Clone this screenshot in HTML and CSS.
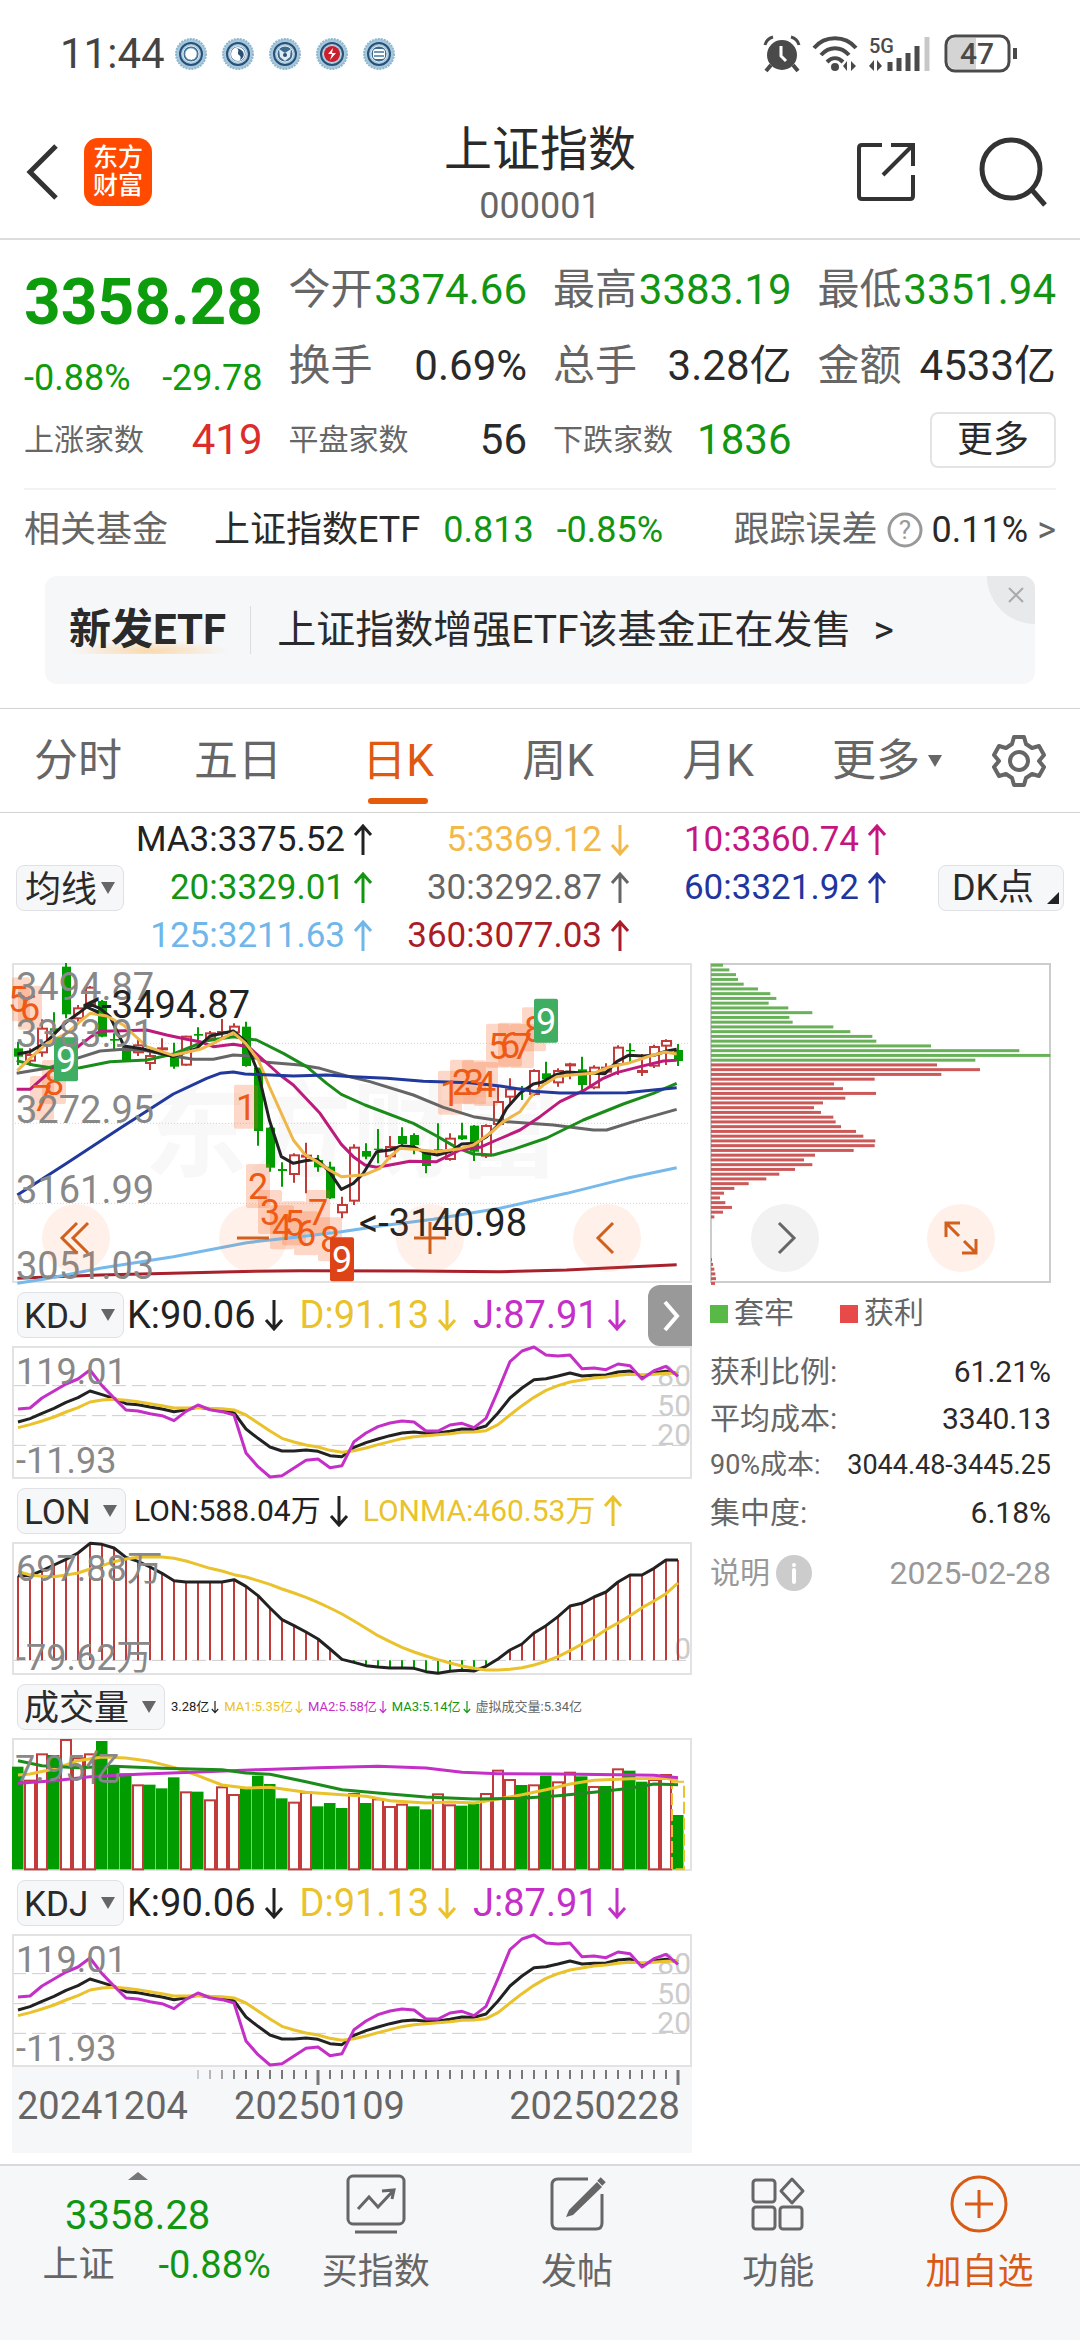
FILE: index.html
```html
<!DOCTYPE html>
<html lang="zh-CN">
<head>
  <meta charset="UTF-8" />
  <meta name="viewport" content="width=device-width, initial-scale=1.0"/>
  <title>上证指数 000001</title>
  <link rel="stylesheet" href="styles.css">
</head>
<body>

  <!-- shared icons -->
  <svg class="sprite" aria-hidden="true">
    <symbol id="up" viewBox="0 0 20 32"><path d="M10 31V2M2 11l8-9 8 9" fill="none" stroke="currentColor" stroke-width="3"/></symbol>
    <symbol id="down" viewBox="0 0 20 32"><path d="M10 1v29M2 21l8 9 8-9" fill="none" stroke="currentColor" stroke-width="3"/></symbol>
    <symbol id="seal" viewBox="0 0 34 34">
      <circle cx="17" cy="17" r="15" fill="#a5c8dc" stroke="#8fb8cf" stroke-width="2" stroke-dasharray="2 1"/>
      <circle cx="17" cy="17" r="11" fill="#a9c9dc" stroke="#2a5078" stroke-width="2"/>
      <circle cx="17" cy="17" r="8" fill="#3f6a90" stroke="#dcebf2" stroke-width="1"/>
    </symbol>
  </svg>

  <div class="status-bar">
    <span class="clock">11:44</span>
    <div class="seals">
      <svg viewBox="0 0 34 34"><use href="#seal"/><circle cx="17" cy="17" r="6" fill="#fff" stroke="#6aa6c4" stroke-dasharray="2 1"/></svg>
      <svg viewBox="0 0 34 34"><use href="#seal"/><circle cx="17" cy="17" r="7" fill="#fff"/><path d="M15 11c5 2 0 5 3 7s1 4 1 5c6-3 5-11-4-12z" fill="#2a5078"/></svg>
      <svg viewBox="0 0 34 34"><use href="#seal"/><path d="M11 12l6 4 6-4-1 8-5 4-5-4z" fill="#dfeaf1"/><circle cx="17" cy="18" r="2" fill="#2a5078"/></svg>
      <svg viewBox="0 0 34 34"><use href="#seal"/><circle cx="17" cy="17" r="8" fill="#c9202e"/><path d="M18 11l-5 6h4l-2 6 6-7h-4z" fill="#fff"/></svg>
      <svg viewBox="0 0 34 34"><use href="#seal"/><rect x="11" y="12" width="12" height="10" rx="3" fill="#fff"/><path d="M12 15h10M12 19h10" stroke="#4a7596" stroke-width="1.5"/></svg>
    </div>
    <div class="system">
      <svg width="38" height="36" viewBox="0 0 38 36">
        <circle cx="19" cy="19" r="15" fill="#4a4a4a"/>
        <path d="M8 29l-5 6M30 29l5 6" stroke="#4a4a4a" stroke-width="4"/>
        <path d="M2 9c1-4 4-7 8-8M36 9c-1-4-4-7-8-8" fill="none" stroke="#4a4a4a" stroke-width="3"/>
        <path d="M18 10v10l5 5" fill="none" stroke="#fff" stroke-width="3"/>
      </svg>
      <svg width="46" height="36" viewBox="0 0 46 36">
        <path d="M2 12c11-13 31-13 42 0M9 19c8-9 20-9 28 0M15 26c5-5 11-5 16 0" fill="none" stroke="#4a4a4a" stroke-width="4"/>
        <circle cx="23" cy="31" r="4" fill="#4a4a4a"/>
        <path d="M35 25v10l-4-5zM39 25v10l5-5z" fill="#4a4a4a"/>
      </svg>
      <svg width="64" height="36" viewBox="0 0 64 36">
        <text x="0" y="17" class="net">5G</text>
        <path d="M5 24v11l-5-5zM8 24v11l5-5z" fill="#4a4a4a"/>
        <path d="M21 26v9M30 22v13M39 17v18M48 10v25" stroke="#4a4a4a" stroke-width="5"/>
        <path d="M58 1v34" stroke="#c8c8c8" stroke-width="5"/>
      </svg>
      <svg width="76" height="40" viewBox="0 0 76 40">
        <rect x="2" y="2" width="63" height="35" rx="9" fill="#fff" stroke="#4a4a4a" stroke-width="3"/>
        <path d="M11 4h21v31H11q-7 0-7-7V11q0-7 7-7z" fill="#d4d4d4"/>
        <path d="M71 14v11" stroke="#4a4a4a" stroke-width="4"/>
        <text x="33" y="30" text-anchor="middle" class="battery">47</text>
      </svg>
    </div>
  </div>

  <header>
    <div class="head-left">
      <button class="icon-btn" aria-label="返回">
        <svg width="30" height="58" viewBox="0 0 30 58"><path d="M26 3L0 29l26 26" fill="none" stroke="#333" stroke-width="5"/></svg>
      </button>
      <a class="logo" href="#"><span>东方</span><span>财富</span></a>
    </div>
    <div class="head-title">
      <h1>上证指数</h1>
      <p>000001</p>
    </div>
    <div class="head-right">
      <button class="icon-btn" aria-label="分享">
        <svg width="62" height="62" viewBox="0 0 62 62"><path d="M26 4H6q-3 0-3 3v48q0 3 3 3h48q3 0 3-3V34M35 4h22v21M57 4L27 34" fill="none" stroke="#333" stroke-width="4"/></svg>
      </button>
      <button class="icon-btn" aria-label="搜索">
        <svg width="72" height="72" viewBox="0 0 72 72"><circle cx="33" cy="33" r="29" fill="none" stroke="#333" stroke-width="5"/><path d="M54 54l13 15" stroke="#333" stroke-width="5"/></svg>
      </button>
    </div>
  </header>

  <section class="quote">
    <div class="price">
      <strong>3358.28</strong>
      <p><span>-0.88%</span><span>-29.78</span></p>
    </div>
    <div class="stat"><span>今开</span><b class="green">3374.66</b></div>
    <div class="stat"><span>最高</span><b class="green">3383.19</b></div>
    <div class="stat"><span>最低</span><b class="green">3351.94</b></div>
    <div class="stat"><span>换手</span><b>0.69%</b></div>
    <div class="stat"><span>总手</span><b>3.28亿</b></div>
    <div class="stat"><span>金额</span><b>4533亿</b></div>
    <div class="stat small"><span>上涨家数</span><b class="red">419</b></div>
    <div class="stat small"><span>平盘家数</span><b>56</b></div>
    <div class="stat small"><span>下跌家数</span><b class="green">1836</b></div>
    <div class="stat more"><button>更多</button></div>
  </section>

  <section class="fund">
    <span class="muted">相关基金</span>
    <a href="#" class="fund-name">上证指数ETF</a>
    <span class="green">0.813</span>
    <span class="green">-0.85%</span>
    <div class="tracking">
      <span class="muted">跟踪误差</span>
      <svg width="36" height="36" viewBox="0 0 36 36"><circle cx="18" cy="18" r="16" fill="none" stroke="#999" stroke-width="3"/><text x="18" y="27" text-anchor="middle" class="help">?</text></svg>
      <span>0.11%</span><span class="muted">&gt;</span>
    </div>
  </section>

  <section class="banner">
    <strong>新发ETF</strong>
    <a href="#">上证指数增强ETF该基金正在发售<span>&gt;</span></a>
    <button class="close" aria-label="关闭"><svg width="18" height="18" viewBox="0 0 18 18"><path d="M2 2l14 14M16 2L2 16" stroke="#aaa" stroke-width="2"/></svg></button>
  </section>

  <nav class="tabs">
    <button>分时</button>
    <button>五日</button>
    <button class="active">日K</button>
    <button>周K</button>
    <button>月K</button>
    <button class="tab-more">更多</button>
    <button class="tab-settings" aria-label="设置">
      <svg width="54" height="54" viewBox="0 0 54 54"><path d="M22 3h10l2 7 6 4 7-2 5 9-5 6 5 6-5 9-7-2-6 4-2 7H22l-2-7-6-4-7 2-5-9 5-6-5-6 5-9 7 2 6-4z" fill="none" stroke="#666" stroke-width="4" stroke-linejoin="round"/><circle cx="27" cy="27" r="9" fill="none" stroke="#666" stroke-width="4"/></svg>
    </button>
  </nav>

  <section class="averages">
    <label class="picker tight"><select aria-label="主图指标"><option>均线</option></select></label>
    <div class="ma-grid">
      <span class="c-black">MA3:3375.52<svg><use href="#up"/></svg></span>
      <span class="c-amber">5:3369.12<svg><use href="#down"/></svg></span>
      <span class="c-magenta">10:3360.74<svg><use href="#up"/></svg></span>
      <span class="c-green">20:3329.01<svg><use href="#up"/></svg></span>
      <span class="c-gray">30:3292.87<svg><use href="#up"/></svg></span>
      <span class="c-blue">60:3321.92<svg><use href="#up"/></svg></span>
      <span class="c-sky">125:3211.63<svg><use href="#up"/></svg></span>
      <span class="c-crimson">360:3077.03<svg><use href="#up"/></svg></span>
    </div>
    <button class="dk">DK点</button>
  </section>

  <main class="analysis">
    <div class="left-col">
      <div class="chart-box">
        <svg id="kline" class="chart" viewBox="0 13 680 320"></svg>
        <div class="controls">
          <button aria-label="最前"><svg width="36" height="36" viewBox="0 0 36 36"><path d="M19 3L4 18l15 15M30 3L15 18l15 15"/></svg></button>
          <button aria-label="缩小"><svg width="36" height="36" viewBox="0 0 36 36"><path d="M2 18h32"/></svg></button>
          <button aria-label="放大"><svg width="36" height="36" viewBox="0 0 36 36"><path d="M2 18h32M18 2v32"/></svg></button>
          <button aria-label="左移"><svg width="36" height="36" viewBox="0 0 36 36"><path d="M24 3L9 18l15 15"/></svg></button>
        </div>
      </div>

      <div class="indicator">
        <label class="picker"><select aria-label="副图一"><option>KDJ</option></select></label>
        <span class="c-black">K:90.06<svg><use href="#down"/></svg></span>
        <span class="c-yellow">D:91.13<svg><use href="#down"/></svg></span>
        <span class="c-purple">J:87.91<svg><use href="#down"/></svg></span>
        <button class="side-toggle" aria-label="收起"><svg width="20" height="36" viewBox="0 0 20 36"><path d="M4 4l12 14L4 32" fill="none" stroke="#fff" stroke-width="4"/></svg></button>
      </div>
      <svg id="kdj1" class="chart" viewBox="0 57 680 133"></svg>

      <div class="indicator lon">
        <label class="picker"><select aria-label="副图二"><option>LON</option></select></label>
        <span class="c-black">LON:588.04万<svg><use href="#down"/></svg></span>
        <span class="c-yellow">LONMA:460.53万<svg><use href="#up"/></svg></span>
      </div>
      <svg id="lon" class="chart" viewBox="0 63 680 133"></svg>

      <div class="indicator volume">
        <label class="picker"><select aria-label="副图三"><option>成交量</option></select></label>
        <span class="c-black">3.28亿<svg><use href="#down"/></svg></span>
        <span class="c-yellow">MA1:5.35亿<svg><use href="#down"/></svg></span>
        <span class="c-purple">MA2:5.58亿<svg><use href="#down"/></svg></span>
        <span class="c-green">MA3:5.14亿<svg><use href="#down"/></svg></span>
        <span class="c-gray">虚拟成交量:5.34亿</span>
      </div>
      <svg id="volume" class="chart" viewBox="0 59 680 133"></svg>

      <div class="indicator">
        <label class="picker"><select aria-label="副图四"><option>KDJ</option></select></label>
        <span class="c-black">K:90.06<svg><use href="#down"/></svg></span>
        <span class="c-yellow">D:91.13<svg><use href="#down"/></svg></span>
        <span class="c-purple">J:87.91<svg><use href="#down"/></svg></span>
      </div>
      <svg id="kdj2" class="chart" viewBox="0 57 680 133"></svg>

      <div class="timeline">
        <svg id="ticks" class="chart" viewBox="0 0 680 20"></svg>
        <div class="dates"><span>20241204</span><span>20250109</span><span>20250228</span></div>
      </div>
    </div>

    <aside>
      <div class="chart-box">
        <svg id="chips" class="chart" viewBox="0 13 341 320"></svg>
        <div class="controls">
          <button class="plain" aria-label="右移"><svg width="36" height="36" viewBox="0 0 36 36"><path d="M12 3l15 15-15 15"/></svg></button>
          <button aria-label="全屏"><svg width="36" height="36" viewBox="0 0 36 36"><path d="M3 17V3h14M3 3l13 13M19 33h14V19M33 33L21 21"/></svg></button>
        </div>
      </div>
      <div class="legend"><span class="lost">套牢</span><span class="gain">获利</span></div>
      <dl class="cost">
        <div><dt>获利比例:</dt><dd>61.21%</dd></div>
        <div><dt>平均成本:</dt><dd>3340.13</dd></div>
        <div class="dense"><dt>90%成本:</dt><dd>3044.48-3445.25</dd></div>
        <div><dt>集中度:</dt><dd>6.18%</dd></div>
      </dl>
      <div class="note">
        <a href="#">说明</a>
        <svg width="36" height="36" viewBox="0 0 36 36"><circle cx="18" cy="18" r="18" fill="#ccc"/><circle cx="18" cy="10" r="2" fill="#fff"/><path d="M18 15v12" stroke="#fff" stroke-width="4" stroke-linecap="round"/></svg>
        <time>2025-02-28</time>
      </div>
    </aside>
  </main>

  <footer>
    <a href="#" class="ticker">
      <i></i>
      <strong>3358.28</strong>
      <p><span>上证</span><b>-0.88%</b></p>
    </a>
    <a href="#">
      <svg width="64" height="64" viewBox="0 0 64 64"><rect x="4" y="4" width="56" height="48" rx="5"/><path d="M11 60h42M14 37l11-12 9 10 15-16M38 19l12-1-2 9"/></svg>
      买指数
    </a>
    <a href="#">
      <svg width="64" height="64" viewBox="0 0 64 64"><path d="M43 7H13q-6 0-6 6v38q0 6 6 6h38q6 0 6-6V22"/><path d="M52 10l5 5-29 28-7 2 3-7z" fill="#666" stroke="none"/><path d="M54 7l5 5" stroke-width="5"/></svg>
      发帖
    </a>
    <a href="#">
      <svg width="64" height="64" viewBox="0 0 64 64"><rect x="7" y="8" width="22" height="22" rx="3"/><rect x="7" y="35" width="22" height="22" rx="3"/><rect x="34" y="35" width="22" height="22" rx="3"/><path d="M46 7l11 12-11 12-11-12z" stroke-linejoin="round"/></svg>
      功能
    </a>
    <a href="#" class="add">
      <svg width="64" height="64" viewBox="0 0 64 64"><circle cx="32" cy="32" r="27"/><path d="M18 32h28M32 18v28"/></svg>
      加自选
    </a>
  </footer>

  <script src="script.js"></script>
</body>
</html>
```
FILE: styles.css
```css
* {
  box-sizing: border-box;
  margin: 0;
  padding: 0;
}

body {
  font-family: Roboto, "Noto Sans CJK SC", sans-serif;
  background: #fff;
  color: #2a2a2a;
  min-height: 100vh;
  display: flex;
  flex-direction: column;
  font-size: 36px;
  line-height: 48px;
}

a {
  color: inherit;
  text-decoration: none;
}

button, select {
  font: inherit;
  color: inherit;
  background: none;
  border: none;
  cursor: pointer;
}

b {
  font-weight: 400;
}

svg {
  display: block;
  flex: none;
  overflow: visible;
}

.sprite {
  position: absolute;
  width: 0;
  height: 0;
}

.green { color: #129612; }
.red { color: #dd2c2c; }
.muted { color: #666; }

.c-black { color: #222; }
.c-amber { color: #f2b94a; }
.c-magenta { color: #c4167f; }
.c-green { color: #129612; }
.c-gray { color: #666; }
.c-blue { color: #1f36a0; }
.c-sky { color: #6fb6ea; }
.c-crimson { color: #ab1c28; }
.c-yellow { color: #e9c22c; }
.c-purple { color: #c42fc8; }

/* status bar */
.status-bar {
  display: flex;
  align-items: center;
  height: 106px;
  padding: 2px 60px 0;
}

.clock {
  font-size: 42px;
  color: #444;
}

.seals {
  display: flex;
  gap: 13px;
  margin-left: 9px;
}

.seals svg {
  width: 34px;
  height: 34px;
}

.system {
  display: flex;
  align-items: center;
  gap: 11px;
  margin-left: auto;
}

.net {
  font-size: 20px;
  font-weight: 500;
  fill: #4a4a4a;
}

.battery {
  font-size: 30px;
  font-weight: 500;
  fill: #4a4a4a;
}

/* header */
header {
  display: grid;
  grid-template-columns: 1fr auto 1fr;
  align-items: center;
  height: 134px;
  padding: 0 30px;
  border-bottom: 2px solid #ddd;
}

.head-left, .head-right {
  display: flex;
  align-items: center;
}

.head-left {
  gap: 24px;
}

.head-right {
  justify-content: flex-end;
  gap: 60px;
}

.logo {
  width: 68px;
  height: 68px;
  padding-top: 6px;
  border-radius: 14px;
  background: #ff4a00;
  color: #fff;
  font-size: 25px;
  font-weight: 500;
  line-height: 28px;
  text-align: center;
}

.logo span {
  display: block;
}

.head-title {
  padding-top: 12px;
  text-align: center;
}

.head-title h1 {
  font-size: 48px;
  font-weight: 400;
  line-height: 56px;
}

.head-title p {
  color: #666;
  line-height: 56px;
}

/* quote */
.quote {
  display: grid;
  grid-template-columns: repeat(4, minmax(0, 1fr));
  grid-template-rows: 76px 76px 72px;
  column-gap: 26px;
  margin: 0 24px;
  padding: 12px 0;
  border-bottom: 2px solid #f2f2f2;
}

.price {
  grid-row: span 2;
  padding-top: 15px;
  color: #0c9c0c;
}

.price strong {
  display: block;
  font-size: 64px;
  font-weight: 700;
  line-height: 72px;
}

.price p {
  display: flex;
  justify-content: space-between;
  margin-top: 14px;
  line-height: 50px;
}

.stat {
  display: flex;
  align-items: center;
  justify-content: space-between;
  font-size: 42px;
  white-space: nowrap;
}

.stat span {
  color: #666;
}

.stat.small span {
  font-size: 30px;
}

.stat.more {
  justify-content: flex-end;
}

.stat.more button {
  width: 126px;
  height: 56px;
  border: 2px solid #e4e4e4;
  border-radius: 8px;
  font-size: 36px;
}

/* related fund */
.fund {
  display: flex;
  align-items: center;
  height: 80px;
  padding: 0 24px;
  gap: 23px;
}

.fund-name {
  margin-left: 23px;
}

.tracking {
  display: flex;
  align-items: center;
  gap: 9px;
  margin-left: auto;
}

.help {
  font-size: 26px;
  fill: #999;
}

.banner {
  display: flex;
  align-items: center;
  position: relative;
  height: 108px;
  margin: 6px 45px 24px;
  padding: 0 24px;
  border-radius: 12px;
  background: #f6f7f9;
  overflow: hidden;
}

.banner strong {
  padding-right: 24px;
  border-right: 1px solid #ddd;
  font-size: 42px;
  background: radial-gradient(closest-side, #fad9ab, transparent) 0 34px / 160px 22px no-repeat;
}

.banner a {
  margin-left: 26px;
  font-size: 39px;
}

.banner a span {
  margin-left: 22px;
}

.close {
  position: absolute;
  top: 0;
  right: 0;
  width: 48px;
  height: 48px;
  padding: 0 0 10px 20px;
  border-bottom-left-radius: 48px;
  background: #e8e9eb;
}

/* period tabs */
.tabs {
  display: grid;
  grid-template-columns: repeat(5, 160fr) 178fr 102fr;
  height: 105px;
  border-top: 1px solid #d4d4d4;
  border-bottom: 1px solid #d4d4d4;
}

.tabs button {
  display: flex;
  align-items: center;
  justify-content: center;
  position: relative;
  padding-right: 4px;
  font-size: 44px;
  color: #666;
}

.tabs .tab-settings {
  padding-right: 20px;
}

.tabs .active {
  color: #df5a10;
}

.tabs .active::after {
  content: "";
  position: absolute;
  bottom: 8px;
  width: 60px;
  height: 6px;
  border-radius: 3px;
  background: #e55b0c;
}

.tab-more::after {
  content: "";
  margin-left: 8px;
  border: 7px solid transparent;
  border-top: 12px solid #666;
  border-bottom: 0;
}

/* moving averages */
.averages {
  display: grid;
  grid-template-columns: 108fr 814fr 126fr;
  align-items: center;
  height: 150px;
  padding: 0 16px;
}

.ma-grid {
  display: grid;
  grid-template-columns: repeat(3, 257px);
  margin-left: -8px;
  font-size: 35px;
}

.ma-grid span {
  display: flex;
  align-items: center;
  justify-content: flex-end;
  gap: 8px;
}

.ma-grid svg {
  width: 20px;
  height: 32px;
}

.picker {
  display: inline-flex;
  align-items: center;
  position: relative;
  height: 46px;
}

.picker select {
  appearance: none;
  height: 46px;
  padding: 0 34px 0 6px;
  border: 1px solid #dfe1e5;
  border-radius: 8px;
  background: #f6f7f9;
}

.picker::after {
  content: "";
  position: absolute;
  right: 9px;
  border: 7px solid transparent;
  border-top: 12px solid #666;
  border-bottom: 0;
  pointer-events: none;
}

.picker.tight select {
  width: 100%;
  padding: 0 26px 0 8px;
}

.dk {
  position: relative;
  height: 46px;
  padding-right: 16px;
  border: 1px solid #dfe1e5;
  border-radius: 8px;
  background: #f6f7f9;
  line-height: 44px;
  white-space: nowrap;
}

.dk::after {
  content: "";
  position: absolute;
  right: 4px;
  bottom: 6px;
  border-left: 12px solid transparent;
  border-bottom: 12px solid #222;
}

/* charts */
.analysis {
  flex: 1;
  display: grid;
  grid-template-columns: 680fr 341fr;
  column-gap: 18px;
  padding: 0 29px 9px 12px;
}

.chart-box {
  position: relative;
}

.chart {
  width: 100%;
  height: auto;
}

.controls {
  position: absolute;
  bottom: 11px;
  left: 0;
  right: 0;
  display: flex;
  justify-content: space-between;
  padding: 0 51px 0 30px;
}

aside .controls {
  padding: 0 56px 0 41px;
}

.controls button {
  width: 68px;
  height: 68px;
  padding: 16px;
  border-radius: 50%;
  background: rgba(255, 110, 40, 0.1);
}

.controls path {
  fill: none;
  stroke: #d0601c;
  stroke-width: 3;
}

.controls .plain {
  background: #f2f2f2;
}

.controls .plain path {
  stroke: #666;
}

.indicator {
  display: flex;
  align-items: center;
  position: relative;
  height: 63px;
  padding-left: 5px;
  font-size: 38px;
  white-space: nowrap;
}

.indicator .picker {
  margin-right: 3px;
  font-size: 35px;
}

.indicator span {
  display: flex;
  align-items: center;
  gap: 8px;
  margin-right: 16px;
}

.indicator span svg {
  width: 20px;
  height: 32px;
}

.lon .picker {
  margin-right: 8px;
}

.lon span {
  font-size: 30px;
  margin-right: 14px;
}

.volume .picker {
  margin-right: 6px;
}

.volume span {
  font-size: 13px;
  gap: 2px;
  margin-right: 5px;
}

.volume span svg {
  width: 8px;
  height: 18px;
}

.side-toggle {
  position: absolute;
  right: 0;
  top: 2px;
  width: 44px;
  height: 61px;
  padding-left: 13px;
  border-radius: 12px 0 0 12px;
  background: #999;
}

.frame {
  fill: none;
  stroke: #e2e2e2;
  stroke-width: 2;
}

.grid { stroke: #d4d4d4; stroke-width: 1; stroke-dasharray: 1 2; }
.dash { stroke: #ccc; stroke-width: 1; stroke-dasharray: 14 6; }
.label { font-size: 36px; fill: #888; }
.price-label { font-size: 38px; fill: #888; }
.level { font-size: 30px; fill: #ccc; text-anchor: end; }
.extreme { font-size: 38px; fill: #222; text-anchor: end; }
.watermark { font-size: 104px; font-weight: 700; fill: #f8f8f8; }
.count { font-size: 36px; fill: #ee5a14; text-anchor: middle; }
.count.nine { fill: #fff; }

.timeline {
  height: 86px;
  padding-top: 1px;
  background: #f6f7f9;
}

.dates {
  display: flex;
  justify-content: space-between;
  padding: 0 12px 0 5px;
  color: #666;
  font-size: 38px;
  line-height: 36px;
}

.dates span:nth-child(2) {
  margin-right: 58px;
}

/* cost distribution */
.legend {
  display: flex;
  gap: 46px;
  height: 60px;
  line-height: 60px;
  font-size: 30px;
  color: #666;
}

.legend span::before {
  content: "";
  display: inline-block;
  width: 18px;
  height: 18px;
  margin-right: 6px;
  background: #58b946;
}

.legend .gain::before {
  background: #e84a4a;
}

.cost {
  margin-top: 5px;
  font-size: 30px;
}

.cost div {
  display: flex;
  justify-content: space-between;
  line-height: 47px;
}

.cost .dense {
  font-size: 27px;
}

.cost dt {
  color: #666;
}

.note {
  display: flex;
  align-items: center;
  gap: 6px;
  margin-top: 13px;
  font-size: 30px;
  line-height: 48px;
  color: #999;
}

.note time {
  margin-left: auto;
  font-size: 32px;
}

/* bottom bar */
footer {
  display: grid;
  grid-template-columns: 275fr repeat(4, 201fr);
  height: 176px;
  border-top: 2px solid #d8d9de;
  background: #f6f7f9;
  color: #666;
}

footer a {
  display: flex;
  flex-direction: column;
  align-items: center;
  padding-top: 6px;
}

footer svg {
  fill: none;
  stroke: currentColor;
  stroke-width: 3;
  margin-bottom: 12px;
}

.ticker i {
  border: 10px solid transparent;
  border-bottom: 8px solid #777;
  border-top: 0;
}

.ticker strong {
  margin-top: 12px;
  font-size: 40px;
  font-weight: 400;
  color: #129612;
}

.ticker p {
  display: flex;
  gap: 44px;
  margin: 1px 0 0 38px;
}

.ticker b {
  font-size: 38px;
  color: #129612;
}

.add {
  color: #d95a14;
}
```
FILE: script.js
```js
const RED = '#c23b3b';
const GREEN = '#009c00';
const STEP = 12;
const LAST = 55;

// y values are stored in thirds of a pixel
const y = v => v / 3;
const x = i => 6 + STEP * i;

const rect = (left, top, w, h, attrs) =>
  `<rect x="${left}" y="${top}" width="${w}" height="${h}" ${attrs}/>`;
const line = (x1, y1, x2, y2, attrs) =>
  `<line x1="${x1}" y1="${y1}" x2="${x2}" y2="${y2}" ${attrs}/>`;
const text = (left, top, cls, value) =>
  `<text x="${left}" y="${top}" class="${cls}">${value}</text>`;
const path = (points, color) =>
  `<polyline points="${points.join(' ')}" fill="none" stroke="${color}" stroke-width="3" stroke-linejoin="round"/>`;
const series = (values, color) => path(values.map((v, i) => [x(i), y(v)]), color);
const sparse = (pairs, color) => path(pairs.map(([i, v]) => [x(i), y(v)]), color);
const draw = (id, parts) => { document.getElementById(id).innerHTML = parts.join(''); };

// body top, body bottom, high, low, 1 = rising day
const candles = [
  [295,320,275,345,0],[312,335,295,348,1],[233,310,208,320,1],[235,243,187,260,0],[50,193,39,205,0],
  [172,208,165,215,1],[110,165,108,168,1],[153,260,150,262,0],[267,272,250,297,0],[290,330,285,332,0],
  [283,310,262,318,1],[315,342,300,360,1],[292,297,265,318,1],[318,350,278,356,0],[257,347,257,347,1],
  [252,257,232,270,0],[247,268,243,272,1],[243,250,207,270,1],[227,250,220,255,1],[230,348,215,350,0],
  [353,543,353,587,0],[533,653,530,665,0],[657,663,637,710,0],[613,675,610,698,1],[614,620,578,730,1],
  [630,652,615,665,0],[650,745,635,747,0],[762,790,740,805,1],[590,755,583,765,1],[603,620,580,628,0],
  [596,600,537,640,0],[588,622,558,628,1],[558,582,532,590,0],[555,585,550,613,0],[605,648,600,670,0],
  [598,602,520,615,0],[563,630,550,632,1],[556,568,518,570,0],[527,605,525,633,0],[525,620,523,624,1],
  [453,525,410,530,1],[415,443,385,460,1],[413,418,408,450,0],[360,435,358,437,1],[370,388,335,400,0],
  [360,400,355,410,1],[340,344,338,388,1],[358,405,320,422,0],[350,415,346,418,1],[350,368,340,372,1],
  [290,345,286,375,1],[300,304,280,340,0],[360,364,312,378,1],[288,350,284,354,1],[270,290,268,345,1],
  [300,333,282,348,0]
];

const averages = {
  '#a8202c': '52,985 300,975 700,965 900,962 1240,963 1500,965 1700,960 1900,950 2030,944',
  '#76b9ea': '52,1000 130,988 300,955 520,920 740,878 900,860 1024,845 1140,828 1300,808 1500,775 1700,730 1880,685 2030,653',
  '#666': '50,370 140,355 240,322 300,303 370,298 440,302 520,318 580,328 640,328 700,315 750,318 800,337 900,345 960,355 1040,378 1110,395 1240,435 1330,472 1420,500 1520,515 1660,525 1780,540 1820,540 1900,515 2030,478',
  '#1b8c1b': '50,332 100,345 160,355 240,353 330,335 440,330 520,312 620,272 700,260 770,270 850,310 920,350 980,400 1024,433 1095,465 1240,520 1310,558 1370,593 1420,612 1480,615 1540,598 1640,564 1750,510 1870,462 1960,430 2030,400',
  '#be1a7c': '50,418 90,418 150,365 200,320 240,285 270,262 300,244 370,242 440,240 500,255 560,268 600,275 640,290 700,283 745,290 790,330 840,375 880,405 960,490 1024,583 1060,620 1095,645 1130,652 1170,645 1230,634 1310,635 1380,600 1440,592 1490,570 1560,540 1620,500 1680,455 1750,422 1810,385 1850,368 1920,350 1990,333 2030,331',
  '#222': '52,312 90,305 140,275 175,240 200,215 235,190 270,163 300,175 330,200 372,288 430,297 520,320 590,295 630,258 700,243 737,275 775,370 808,510 844,620 880,640 916,632 952,628 988,665 1024,718 1060,700 1090,670 1130,605 1170,600 1205,588 1240,590 1275,608 1312,615 1350,605 1385,582 1425,580 1460,560 1490,530 1520,475 1560,430 1600,402 1625,397 1665,375 1700,366 1740,368 1780,370 1815,371 1850,335 1885,316 1930,318 1965,315 2000,303 2030,298',
  '#efb748': '52,362 90,325 140,280 200,250 240,215 270,190 320,198 370,225 440,290 520,316 600,298 640,280 700,248 737,280 775,330 808,410 844,490 880,570 916,615 952,635 988,660 1024,680 1095,674 1140,655 1170,620 1200,595 1240,598 1310,605 1380,596 1420,585 1470,550 1510,515 1560,485 1600,430 1630,405 1670,380 1720,374 1780,370 1830,350 1890,338 1950,318 1995,306 2030,312',
  '#21389c': '52,735 200,640 360,535 520,432 620,385 660,370 700,366 735,372 880,378 980,375 1060,380 1160,385 1270,394 1410,398 1500,408 1600,424 1680,429 1880,428 1960,420 2030,413'
};

// sequence counters: digit, bar, centre
const counts = [
  [5,0,148],[6,1,173],[7,2,444],[8,3,396],
  [1,19,470],[2,20,708],[3,21,786],[4,22,832],[5,23,820],[6,24,850],[7,25,786],[8,26,868],
  [1,36,428],[2,37,395],[3,38,397],[4,39,402],[5,40,287],[6,41,284],[7,42,288],[8,43,238]
];
const nines = [[4,328,'#3fae62'],[27,928,'#de4318'],[44,212,'#3fae62']];

function drawKline() {
  const out = [text(132, 219, 'watermark', '东方财富')];
  [280, 520, 760].forEach(v => out.push(line(0, y(v), 680, y(v), 'class="grid"')));
  out.push(rect(1, 14, 678, 318, 'class="frame"'));

  candles.forEach(([top, bottom, high, low, up], i) => {
    const color = up ? RED : GREEN;
    out.push(line(x(i), y(high), x(i), y(low), `stroke="${color}" stroke-width="2"`));
    out.push(up
      ? rect(x(i) - 4, y(top) + 1, 9, Math.max(1, y(bottom - top) - 2), `fill="#fff" stroke="${color}" stroke-width="2"`)
      : rect(x(i) - 4, y(top), 9, y(bottom - top), `fill="${color}"`));
  });

  counts.forEach(([, i, v]) => {
    const left = Math.max(0, x(i) - 12);
    out.push(rect(left, y(v) - 22, x(i) + 12 - left, 44, 'rx="2" fill="#f96a2a" opacity=".26"'));
  });

  Object.entries(averages).forEach(([color, points]) => {
    out.push(path(points.split(' ').map(p => {
      const [px, py] = p.split(',');
      return [px / 3 - 12, y(py)];
    }), color));
  });

  counts.forEach(([n, i, v]) => out.push(text(x(i), y(v) + 13, 'count', n)));
  nines.forEach(([i, v, color]) => {
    out.push(rect(x(i) - 12, y(v) - 22, 24, 44, `rx="2" fill="${color}"`));
    out.push(text(x(i), y(v) + 13, 'count nine', 9));
  });

  [['3494.87', 150], ['3383.91', 290], ['3272.95', 520], ['3161.99', 760], ['3051.03', 988]]
    .forEach(([label, v]) => out.push(text(4, y(v), 'price-label', label)));
  out.push(text(238, 68, 'extreme', '&lt;-3494.87'));
  out.push(text(515, 286, 'extreme', '&lt;-3140.98'));
  draw('kline', out);
}

const K = [399,389,373,358,340,326,306,317,328,344,347,354,360,368,362,354,361,365,371,420,448,474,486,486,483,487,500,503,475,461,450,440,432,429,433,432,427,420,421,411,372,327,297,272,269,261,252,261,259,258,249,246,262,252,247,254];
const D = [416,407,396,384,369,356,339,333,331,334,338,344,350,357,357,356,358,359,363,378,402,426,448,459,468,474,484,490,485,477,467,458,449,443,440,437,434,430,429,425,407,378,350,325,304,290,279,273,267,264,259,256,257,256,253,253];
const J = [360,357,327,306,285,270,243,290,327,363,366,374,380,395,367,348,362,368,378,492,533,564,560,537,514,510,536,530,458,432,413,402,396,399,426,426,408,403,416,388,305,218,186,174,198,201,198,239,237,242,225,230,270,245,232,262];

function drawKdj(id) {
  const out = [];
  [[290, 80], [380, 50], [469, 20]].forEach(([v, level]) => {
    out.push(line(0, y(v), 680, y(v), 'class="dash"'));
    out.push(text(679, y(v), 'level', level));
  });
  out.push(rect(1, 58, 678, 131, 'class="frame"'));
  out.push(series(K, '#222'), series(D, '#e9c22c'), series(J, '#c42fc8'));
  out.push(text(4, 95, 'label', '119.01'), text(4, 184, 'label', '-11.93'));
  draw(id, out);
}

const lon = [290,290,275,258,241,222,193,196,207,235,247,264,283,305,309,309,309,309,302,322,350,387,422,440,459,480,510,541,550,560,564,567,567,568,578,583,577,574,576,562,540,513,495,462,440,413,381,373,354,339,309,288,288,268,243,243];
const lonMa = [277,288,292,293,288,282,270,260,248,240,235,233,234,238,246,257,268,276,287,294,305,316,330,342,355,370,387,405,426,448,470,488,505,519,531,542,552,561,568,573,573,571,566,558,547,533,515,495,476,452,432,410,386,366,344,312];

function drawLon() {
  const zero = 544;
  const out = [line(0, y(zero), 680, y(zero), 'class="dash"'), text(679, y(zero) - 1, 'level', 0)];
  out.push(rect(1, 64, 678, 131, 'class="frame"'));
  lon.forEach((v, i) => out.push(line(x(i), y(v), x(i), y(zero), `stroke="${v < zero ? RED : GREEN}" stroke-width="2"`)));
  out.push(series(lon, '#222'), series(lonMa, '#e9c22c'));
  out.push(text(4, 102, 'label', '697.88万'), text(4, 191, 'label', '-79.62万'));
  draw('lon', out);
}

const volume = [263,302,223,228,180,235,223,186,260,283,316,317,328,295,337,338,361,322,345,325,290,315,358,368,338,382,372,387,342,372,358,381,374,382,391,343,376,380,375,342,272,300,318,316,290,307,278,292,321,321,268,275,308,300,285,408];
const rising = [1,2,4,5,6,10,14,16,17,18,23,24,28,30,31,32,35,36,39,40,41,43,45,46,48,50,53,54];

function drawVolume() {
  const base = 571;
  const out = [rect(1, 60, 678, 131, 'class="frame"')];
  volume.forEach((v, i) => {
    out.push(rising.includes(i)
      ? rect(x(i) - 5, y(v) + 1, 10, y(base - v) - 1, `fill="#fff" stroke="${RED}" stroke-width="2"`)
      : rect(x(i) - 6, y(v), 11.5, y(base - v), `fill="${GREEN}"`));
  });
  out.push(rect(x(LAST) - 6, y(308), 12, y(base - 308), 'fill="none" stroke="#e9c22c" stroke-width="2" stroke-dasharray="12 4"'));
  out.push(sparse([[0,288],[1,285],[3,270],[5,245],[7,234],[9,237],[11,247],[13,265],[15,290],[17,318],[19,327],[21,325],[24,340],[27,347],[29,352],[31,365],[34,372],[36,369],[38,372],[40,360],[42,347],[44,332],[46,315],[48,304],[51,299],[54,298],[55,305]], '#e9c22c'));
  out.push(sparse([[0,313],[3,305],[6,293],[10,286],[15,279],[20,272],[25,266],[30,262],[34,267],[37,280],[40,284],[45,285],[50,287],[53,289],[55,296]], '#c42fc8'));
  out.push(sparse([[0,245],[2,260],[5,266],[8,262],[12,268],[17,272],[19,282],[21,286],[24,308],[27,332],[30,342],[34,354],[38,360],[42,358],[45,350],[48,340],[51,328],[53,315],[55,317]], '#1b8c1b'));
  out.push(text(3, 102, 'label', '7.95亿'));
  draw('volume', out);
}

function drawTicks() {
  const out = [];
  for (let i = 15; i <= LAST; i++) {
    const major = i === 25 || i === LAST;
    out.push(line(x(i), 2, x(i), major ? 17 : 11,
      `stroke="#777" stroke-width="${major ? 3 : 2}" opacity="${Math.min(1, (i - 13) / 6)}"`));
  }
  draw('ticks', out);
}

const lost = [36,55,75,81,98,141,178,196,173,232,304,235,245,367,418,484,496,660,925,1018,793];
const gained = [678,807,691,491,369,396,495,403,336,309,330,367,374,390,435,457,493,491,428,312,279,304,252,205,166,113,70,39,27,43,63,36,10,0,0,0,0,0,0,0,0,3,6,10,13,15,12];

function drawChips() {
  const out = [rect(1, 14, 339, 318, 'fill="none" stroke="#ccc" stroke-width="2"')];
  lost.concat(gained).forEach((v, i) => {
    out.push(rect(1, y(41 + 14.25 * i), y(v), 3, `fill="${i < lost.length ? '#69b158' : '#cc5858'}"`));
  });
  draw('chips', out);
}

drawKline();
drawKdj('kdj1');
drawLon();
drawVolume();
drawKdj('kdj2');
drawTicks();
drawChips();
```
